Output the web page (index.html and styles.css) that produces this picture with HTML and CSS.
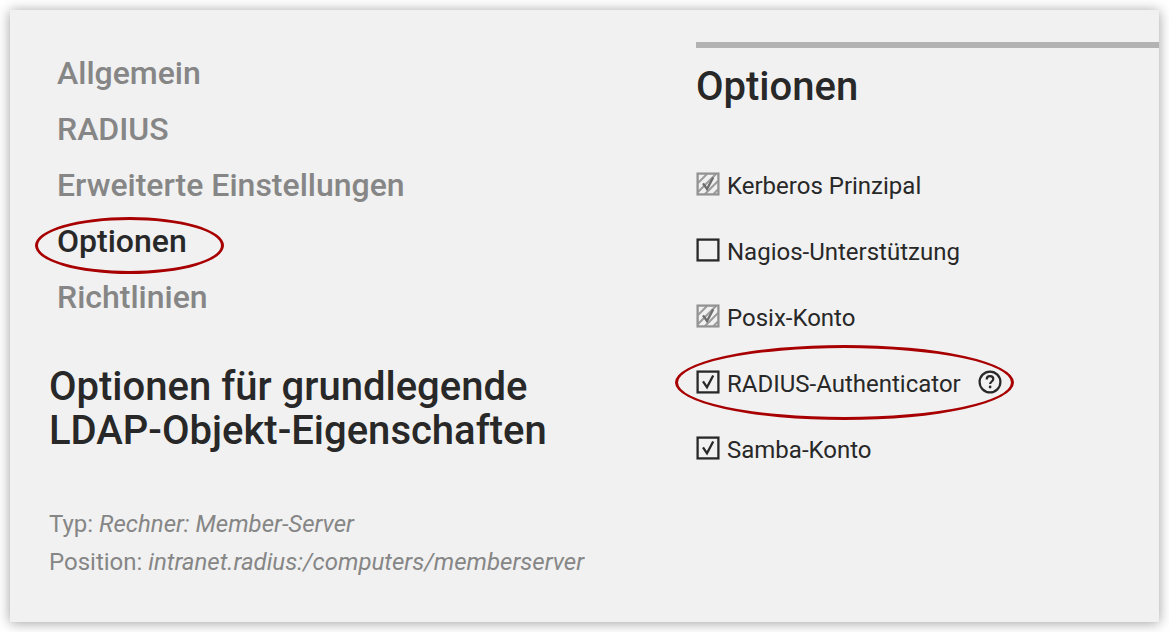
FILE: index.html
```html
<!DOCTYPE html>
<html lang="de">
<head>
<meta charset="utf-8">
<meta name="viewport" content="width=device-width, initial-scale=1">
<title>Optionen</title>
<link rel="stylesheet" href="styles.css">
</head>
<body>
<svg class="sprite" aria-hidden="true">
  <symbol id="box" viewBox="0 0 24 24">
    <rect x="1.6" y="1.6" width="20.8" height="20.8" fill="none" stroke="currentColor" stroke-width="2.3"/>
  </symbol>
  <symbol id="box-checked" viewBox="0 0 24 24">
    <rect x="1.6" y="1.6" width="20.8" height="20.8" fill="none" stroke="currentColor" stroke-width="2.3"/>
    <path d="M7 11.3l4 6L17.2 5.5" fill="none" stroke="currentColor" stroke-width="2.3"/>
  </symbol>
  <symbol id="box-locked" viewBox="0 0 24 24">
    <path d="M2 11L11 2M2 20L20 2M9 22L22 9M17.5 22l4.5-4.5" fill="none" stroke="#9c9c9c" stroke-width="2.1"/>
    <rect x="1.6" y="1.6" width="20.8" height="20.8" fill="none" stroke="#939393" stroke-width="2.3"/>
    <path d="M7 11.3l4 5.7L17.2 5.5" fill="none" stroke="#6c6c6c" stroke-width="2.3"/>
  </symbol>
</svg>
<main class="panel">
  <section class="side">
    <nav class="nav">
      <a class="nav-item" href="#allgemein">Allgemein</a>
      <a class="nav-item" href="#radius">RADIUS</a>
      <a class="nav-item" href="#erweitert">Erweiterte Einstellungen</a>
      <a class="nav-item nav-item-active" href="#optionen">Optionen<span class="ring ring-nav"></span></a>
      <a class="nav-item" href="#richtlinien">Richtlinien</a>
    </nav>
    <h1 class="title">Optionen für grundlegende<br>LDAP-Objekt-Eigenschaften</h1>
    <div class="meta">
      <p class="meta-line">Typ: <em>Rechner: Member-Server</em></p>
      <p class="meta-line">Position: <em>intranet.radius:/computers/memberserver</em></p>
    </div>
  </section>
  <section class="content" id="optionen">
    <h2 class="title">Optionen</h2>
    <div class="options">
      <div class="option">
        <span class="check"><input class="check-input" type="checkbox" id="kerberos" checked disabled><svg class="check-icon" aria-hidden="true"><use href="#box-locked"/></svg></span>
        <label for="kerberos">Kerberos Prinzipal</label>
      </div>
      <div class="option">
        <span class="check"><input class="check-input" type="checkbox" id="nagios"><svg class="check-icon" aria-hidden="true"><use href="#box"/></svg></span>
        <label for="nagios">Nagios-Unterstützung</label>
      </div>
      <div class="option">
        <span class="check"><input class="check-input" type="checkbox" id="posix" checked disabled><svg class="check-icon" aria-hidden="true"><use href="#box-locked"/></svg></span>
        <label for="posix">Posix-Konto</label>
      </div>
      <div class="option">
        <span class="check"><input class="check-input" type="checkbox" id="authenticator" checked><svg class="check-icon" aria-hidden="true"><use href="#box-checked"/></svg></span>
        <label for="authenticator">RADIUS-Authenticator</label>
        <button class="help" type="button" aria-label="Hilfe">
          <svg class="help-icon" viewBox="0 0 24 24" aria-hidden="true">
            <circle cx="12" cy="12" r="10.4" fill="none" stroke="currentColor" stroke-width="2.2"/>
            <path d="M8.7 9.4c0-2 1.4-3.2 3.3-3.2s3.3 1.1 3.3 2.9c0 2.3-3.2 2.5-3.2 5" fill="none" stroke="currentColor" stroke-width="2.2"/>
            <circle cx="12.1" cy="17" r="1.4" fill="currentColor"/>
          </svg>
        </button>
        <span class="ring ring-option"></span>
      </div>
      <div class="option">
        <span class="check"><input class="check-input" type="checkbox" id="samba" checked><svg class="check-icon" aria-hidden="true"><use href="#box-checked"/></svg></span>
        <label for="samba">Samba-Konto</label>
      </div>
    </div>
  </section>
</main>
</body>
</html>
```
FILE: styles.css
```css
* {
  box-sizing: border-box;
}

body {
  margin: 0;
  padding: 10px;
  background: #fff;
  color: #282828;
  font-family: Roboto, "Liberation Sans", sans-serif;
  font-size: 24px;
}

.sprite {
  position: absolute;
  width: 0;
  height: 0;
}

.panel {
  display: grid;
  grid-template-columns: 686fr 463fr;
  min-height: calc(100vh - 20px);
  background: #f1f1f1;
  box-shadow: 0 1px 12px rgba(0, 0, 0, 0.38);
}

.side {
  padding: 35px 40px 40px 39px;
}

.nav {
  display: flex;
  flex-direction: column;
  align-items: flex-start;
  margin-bottom: 40px;
  padding-left: 8px;
}

.nav-item {
  position: relative;
  color: #868686;
  font-size: 32px;
  font-weight: 500;
  line-height: 56px;
  text-decoration: none;
}

.nav-item-active {
  color: #282828;
}

.title {
  margin: 0;
  font-size: 40px;
  font-weight: 500;
  line-height: 44px;
}

.meta {
  margin-top: 52px;
  color: #868686;
}

.meta-line {
  margin: 0;
  line-height: 38px;
}

.content {
  align-self: start;
  margin-top: 32px;
  padding-top: 17px;
  border-top: 6px solid #b3b3b3;
}

.options {
  margin-top: 44px;
}

.option {
  position: relative;
  display: flex;
  align-items: center;
  width: fit-content;
  height: 66px;
}

.check {
  display: grid;
  margin: 0 7px 4px 0;
}

.check-input,
.check-icon {
  grid-area: 1 / 1;
  width: 24px;
  height: 24px;
  margin: 0;
}

.check-input {
  appearance: none;
}

.check-icon {
  pointer-events: none;
}

.help {
  display: flex;
  margin: 0 0 4px 17px;
  padding: 0;
  border: 0;
  background: none;
  color: inherit;
}

.help-icon {
  width: 24px;
  height: 24px;
}

.ring {
  position: absolute;
  border: 3px solid #a80000;
  border-radius: 50%;
  pointer-events: none;
}

.ring-nav {
  top: 4px;
  left: -22px;
  width: 189px;
  height: 57px;
}

.ring-option {
  top: -6px;
  left: -21px;
  width: 339px;
  height: 75px;
}
```
